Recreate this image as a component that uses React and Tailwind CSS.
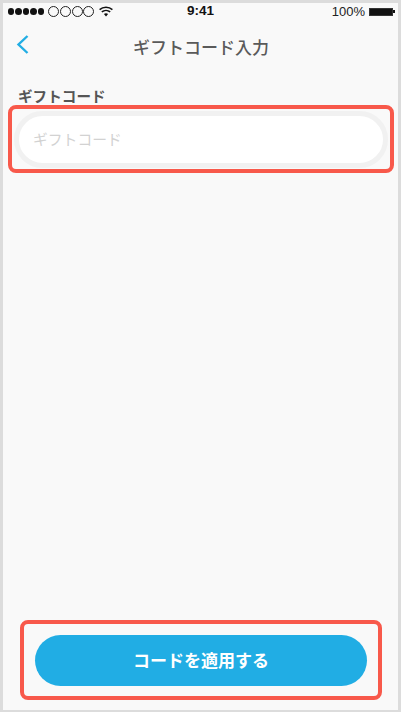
const jp = { fontFamily: '"Noto Sans CJK JP", "Liberation Sans", sans-serif' };

function Wifi() {
  return (
    <svg width="14" height="11" viewBox="0 0 14 11" className="ml-[4px] shrink-0">
      <path d="M0.6 3.6C4.2 0.4 9.8 0.4 13.4 3.6" fill="none" stroke="#111" strokeWidth="1.5" />
      <path d="M2.8 5.9C5.2 3.9 8.8 3.9 11.2 5.9" fill="none" stroke="#111" strokeWidth="1.5" />
      <path d="M4.9 8.1C6.2 7 7.8 7 9.1 8.1L7 10.4Z" fill="#111" />
    </svg>
  );
}

export default function App() {
  return (
    <div className="w-[401px] h-[712px] bg-[#f9f9f9] border-x-[3px] border-t-[3px] border-b-[2px] border-[#dcdcdc] flex flex-col overflow-hidden" style={jp}>
      <div className="h-[17px] flex items-center justify-between pl-[5px] pr-[3px] text-[13px] text-[#111] relative" style={{ fontFamily: '"Liberation Sans", sans-serif' }}>
        <div className="flex items-center">
          {[0, 1, 2, 3, 4].map((i) => (
            <span key={i} className="w-[6.4px] h-[6.4px] mr-[1px] rounded-full bg-[#111]" />
          ))}
          <span className="w-[3px]" />
          {[0, 1, 2, 3].map((i) => (
            <span key={i} className="w-[11px] h-[11px] mr-[0.8px] rounded-full border border-[#222] box-border" />
          ))}
          <Wifi />
        </div>
        <span className="absolute left-[184px] font-bold text-[13.5px]">9:41</span>
        <div className="flex items-center gap-[4px]">
          <span className="text-[#222]">100%</span>
          <div className="flex items-center">
            <div className="w-[24px] h-[8px] bg-[#111] border border-[#333]" />
            <div className="w-[2px] h-[3px] bg-[#111]" />
          </div>
        </div>
      </div>

      <div className="h-[56px] flex items-center relative pb-[3px]">
        <svg width="14" height="22" viewBox="0 0 14 22" className="ml-[13px] mb-[3px]">
          <path d="M11.5 2L2.5 10.5L11.5 19" fill="none" stroke="#22aee4" strokeWidth="2.4" />
        </svg>
        <span className="absolute left-[130px] text-[17px] font-medium text-[#5a5a5a] leading-none">ギフトコード入力</span>
      </div>

      <div className="pl-[15px] text-[14.6px] font-bold text-[#555] leading-[18px] mt-[11px]">ギフトコード</div>

      <div className="ml-[5px] w-[386px] h-[68px] border-[4px] border-[#f8594b] rounded-[8px] flex items-center pl-[2px] box-border">
        <div className="w-[374px] h-[57px] rounded-full border-[5px] border-[#f1f1f1] bg-white flex items-center pl-[14px] box-border text-[14.8px] text-[#d2d2d2]">ギフトコード</div>
      </div>

      <div className="mt-auto mb-[10px] ml-[17px] w-[362px] h-[80px] border-[4px] border-[#f8594b] rounded-[8px] flex items-center justify-center box-border">
        <div className="w-[332px] h-[51px] rounded-full bg-[#21ade4] flex items-center justify-center text-white text-[17px] font-bold">コードを適用する</div>
      </div>
    </div>
  );
}
